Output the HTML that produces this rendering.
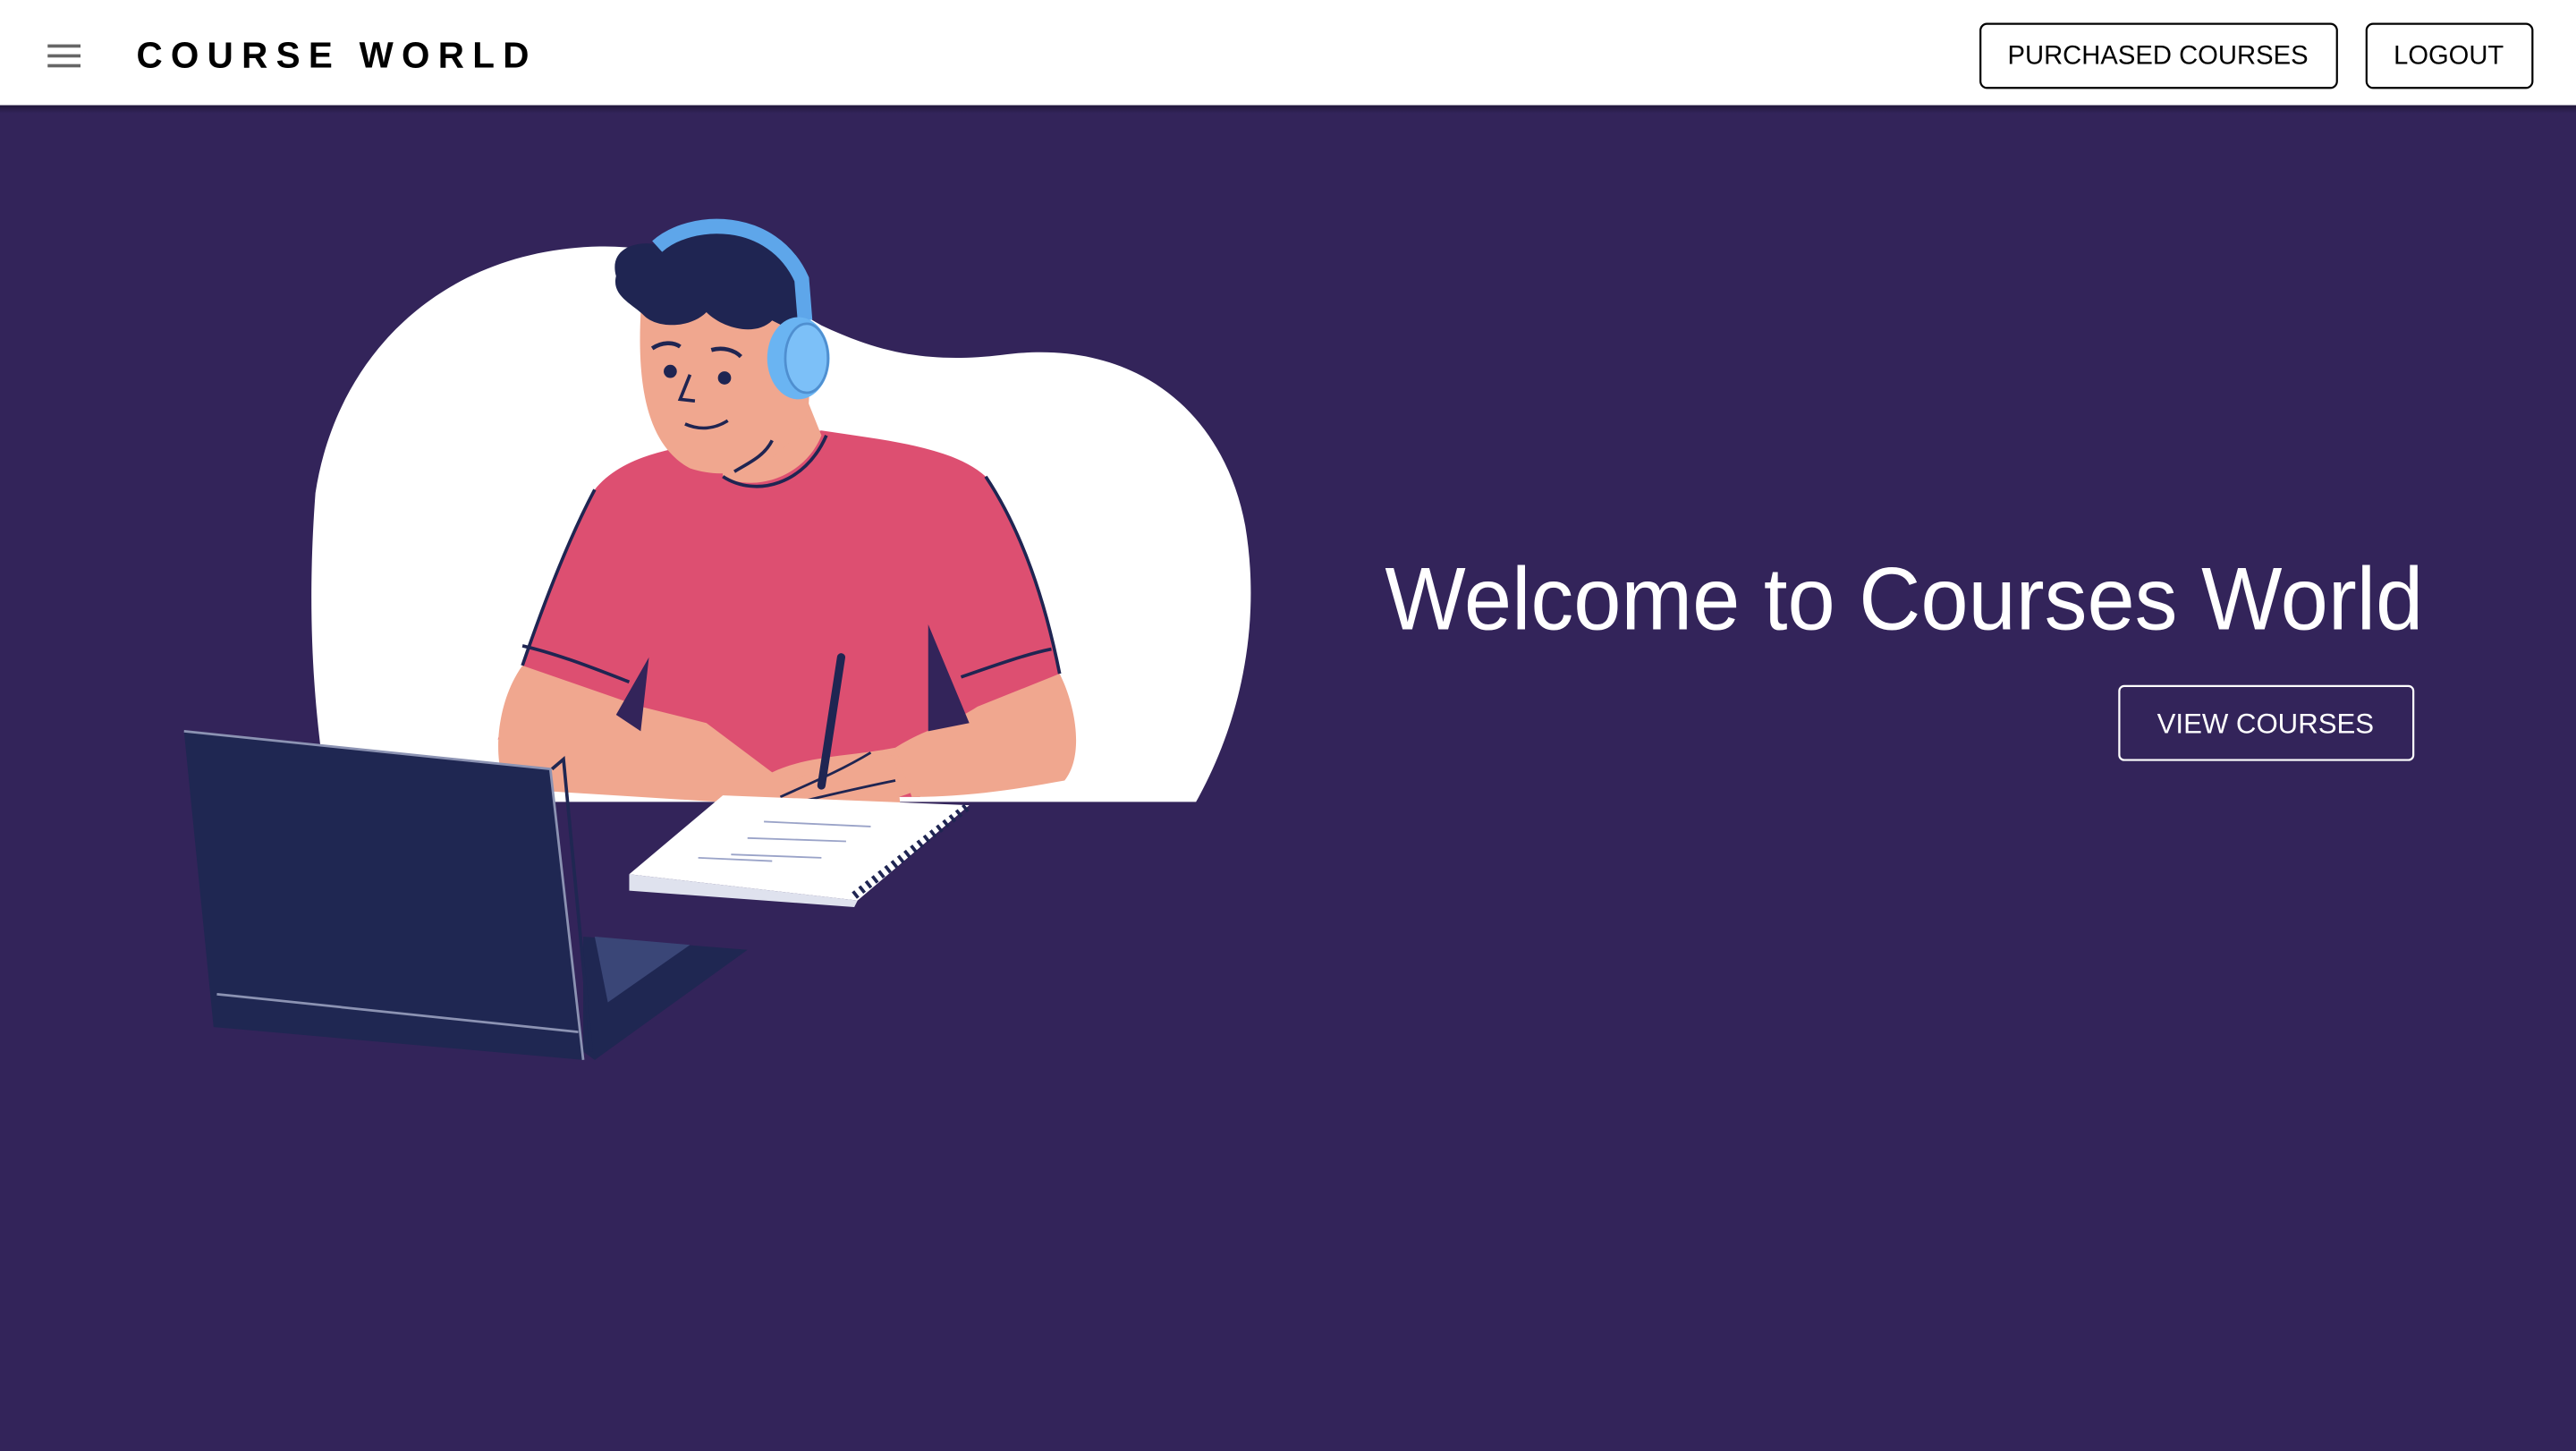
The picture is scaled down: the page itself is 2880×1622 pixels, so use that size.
<!DOCTYPE html>
<html><head><meta charset="utf-8"><style>
html,body{margin:0;padding:0;background:#33245a;overflow:hidden}
svg{display:block}
text{font-family:"Liberation Sans",Arial,sans-serif}
</style></head><body>
<svg width="2880" height="1622" viewBox="0 0 1568 883" preserveAspectRatio="none" xmlns="http://www.w3.org/2000/svg">
<defs><linearGradient id="sh" x1="0" y1="0" x2="0" y2="1"><stop offset="0" stop-color="#000" stop-opacity=".35"/><stop offset="1" stop-color="#000" stop-opacity="0"/></linearGradient></defs>
<rect width="1568" height="883" fill="#33245a"/>
<rect y="64" width="1568" height="5" fill="url(#sh)"/>
<rect width="1568" height="64" fill="#fff"/>
<g fill="#666"><rect x="29" y="27" width="20" height="2"/><rect x="29" y="33" width="20" height="2"/><rect x="29" y="39" width="20" height="2"/></g>
<text x="83" y="41" font-size="22" font-weight="bold" fill="#000" textLength="239" lengthAdjust="spacing">COURSE WORLD</text>
<rect x="1205.5" y="14.5" width="217" height="39" rx="4" fill="none" stroke="#000" stroke-width="1.2"/>
<text x="1222" y="39" font-size="16" fill="#000" textLength="183" lengthAdjust="spacingAndGlyphs">PURCHASED COURSES</text>
<rect x="1440.5" y="14.5" width="101" height="39" rx="4" fill="none" stroke="#000" stroke-width="1.2"/>
<text x="1457" y="39" font-size="16" fill="#000" textLength="67" lengthAdjust="spacingAndGlyphs">LOGOUT</text>
<text x="843" y="383" font-size="54" fill="#fff" textLength="632" lengthAdjust="spacingAndGlyphs">Welcome to Courses World</text>
<rect x="1290" y="417.5" width="179" height="45" rx="3" fill="none" stroke="#fff" stroke-width="1.2"/>
<text x="1313" y="446" font-size="17" fill="#fff" textLength="132" lengthAdjust="spacingAndGlyphs">VIEW COURSES</text>

<!-- blob -->
<path d="M200 488 C192 440 186 380 192 300 C205 215 270 152 365 150 C420 149 460 175 500 198 C530 212 560 222 610 216 C690 205 745 250 758 320 C768 380 755 440 728 488 Z" fill="#fff"/>
<!-- shirt -->
<path d="M303 450 C320 400 340 340 362 298 C380 275 420 270 450 268 L500 262 C540 268 580 272 600 290 C620 320 635 360 645 410 L600 430 L560 485 L420 485 L340 440 Z" fill="#dd4f71"/>
<path d="M362 298 C345 330 330 370 318 405" fill="none" stroke="#1f2552" stroke-width="2"/>
<path d="M600 290 C620 320 635 360 645 410" fill="none" stroke="#1f2552" stroke-width="2"/>
<!-- neck/face -->
<path d="M437 250 L440 290 C460 300 490 290 500 265 L490 240 Z" fill="#f0a78f"/>
<path d="M390 190 C388 230 392 270 420 285 C450 295 480 280 492 250 L495 200 L420 175 Z" fill="#f0a78f"/>
<path d="M440 290 C460 303 490 295 503 265" fill="none" stroke="#1f2552" stroke-width="2"/>
<path d="M447 287 C455 282 465 278 470 268" fill="none" stroke="#1f2552" stroke-width="2"/>
<!-- hair -->
<path d="M375 168 C370 150 390 145 405 150 C420 135 460 135 480 150 C495 165 495 190 490 205 L470 195 C460 205 440 200 430 190 C420 200 400 200 392 192 C385 185 372 180 375 168 Z" fill="#1f2552"/>
<circle cx="408" cy="226" r="4" fill="#1f2552"/><circle cx="441" cy="230" r="4" fill="#1f2552"/>
<path d="M397 212 C403 208 410 208 414 211 M433 213 C440 211 447 213 451 217" stroke="#1f2552" stroke-width="2.5" fill="none"/>
<path d="M420 228 L414 243 L423 244" stroke="#1f2552" stroke-width="2" fill="none"/>
<path d="M417 258 C426 262 435 261 443 256" stroke="#1f2552" stroke-width="2" fill="none"/>
<!-- headphones -->
<path d="M400 150 C420 132 470 130 488 170 L490 195" fill="none" stroke="#5ea6ea" stroke-width="9"/>
<ellipse cx="486" cy="218" rx="19" ry="25" fill="#6ab4f2"/>
<ellipse cx="491" cy="218" rx="13" ry="21" fill="#7cc0f8" stroke="#4f8fd0" stroke-width="1.5"/>
<!-- arms -->
<path d="M318 405 C300 430 300 470 310 480 L470 490 C500 495 540 490 560 480 L545 455 C520 460 490 460 470 470 L430 440 L390 430 Z" fill="#f0a78f"/>
<path d="M645 410 C655 430 660 460 648 475 C620 480 590 485 555 485 L545 455 C560 445 580 440 595 430 Z" fill="#f0a78f"/>
<path d="M470 490 C490 500 520 498 548 490 L545 460 C525 458 500 465 478 478 Z" fill="#f0a78f"/>
<path d="M318 393 C340 398 365 408 383 415 M585 412 C605 405 625 398 640 395" stroke="#1f2552" stroke-width="2" fill="none"/>
<path d="M565 380 L590 440 L565 445 Z M395 400 L390 445 L375 435 Z" fill="#33245a"/>
<path d="M512 400 L500 478" stroke="#1f2552" stroke-width="5" stroke-linecap="round"/>
<path d="M475 485 C490 478 510 470 530 458 M478 490 C500 485 520 480 545 475" stroke="#1f2552" stroke-width="1.5" fill="none"/>
<!-- notebook -->
<path d="M383 532 L440 484 L590 490 L522 548 Z" fill="#fff"/>
<path d="M383 532 L383 542 L520 552 L522 548 Z" fill="#dfe2ee"/>
<path d="M520 545 L590 490" stroke="#1f2552" stroke-width="5" stroke-dasharray="2 3" fill="none"/>
<g stroke="#9aa3c8" stroke-width="1" fill="none"><path d="M445 520 L500 522 M455 510 L515 512 M465 500 L530 503 M425 522 L470 524"/></g>
<!-- laptop -->
<path d="M355 570 L455 578 L362 645 L355 640 Z" fill="#1f2752"/>
<path d="M362 570 L420 575 L370 610 Z" fill="#3a4677"/>
<path d="M112 445 L335 468 L355 645 L130 625 Z" fill="#1f2752"/>
<path d="M112 445 L335 468 L355 645" fill="none" stroke="#8c93b3" stroke-width="1.5"/>
<path d="M132 605 L352 628" stroke="#8c93b3" stroke-width="1.5"/>
<path d="M336 468 L343 462 L360 640" fill="none" stroke="#1f2752" stroke-width="2"/>
</svg>
</body></html>
